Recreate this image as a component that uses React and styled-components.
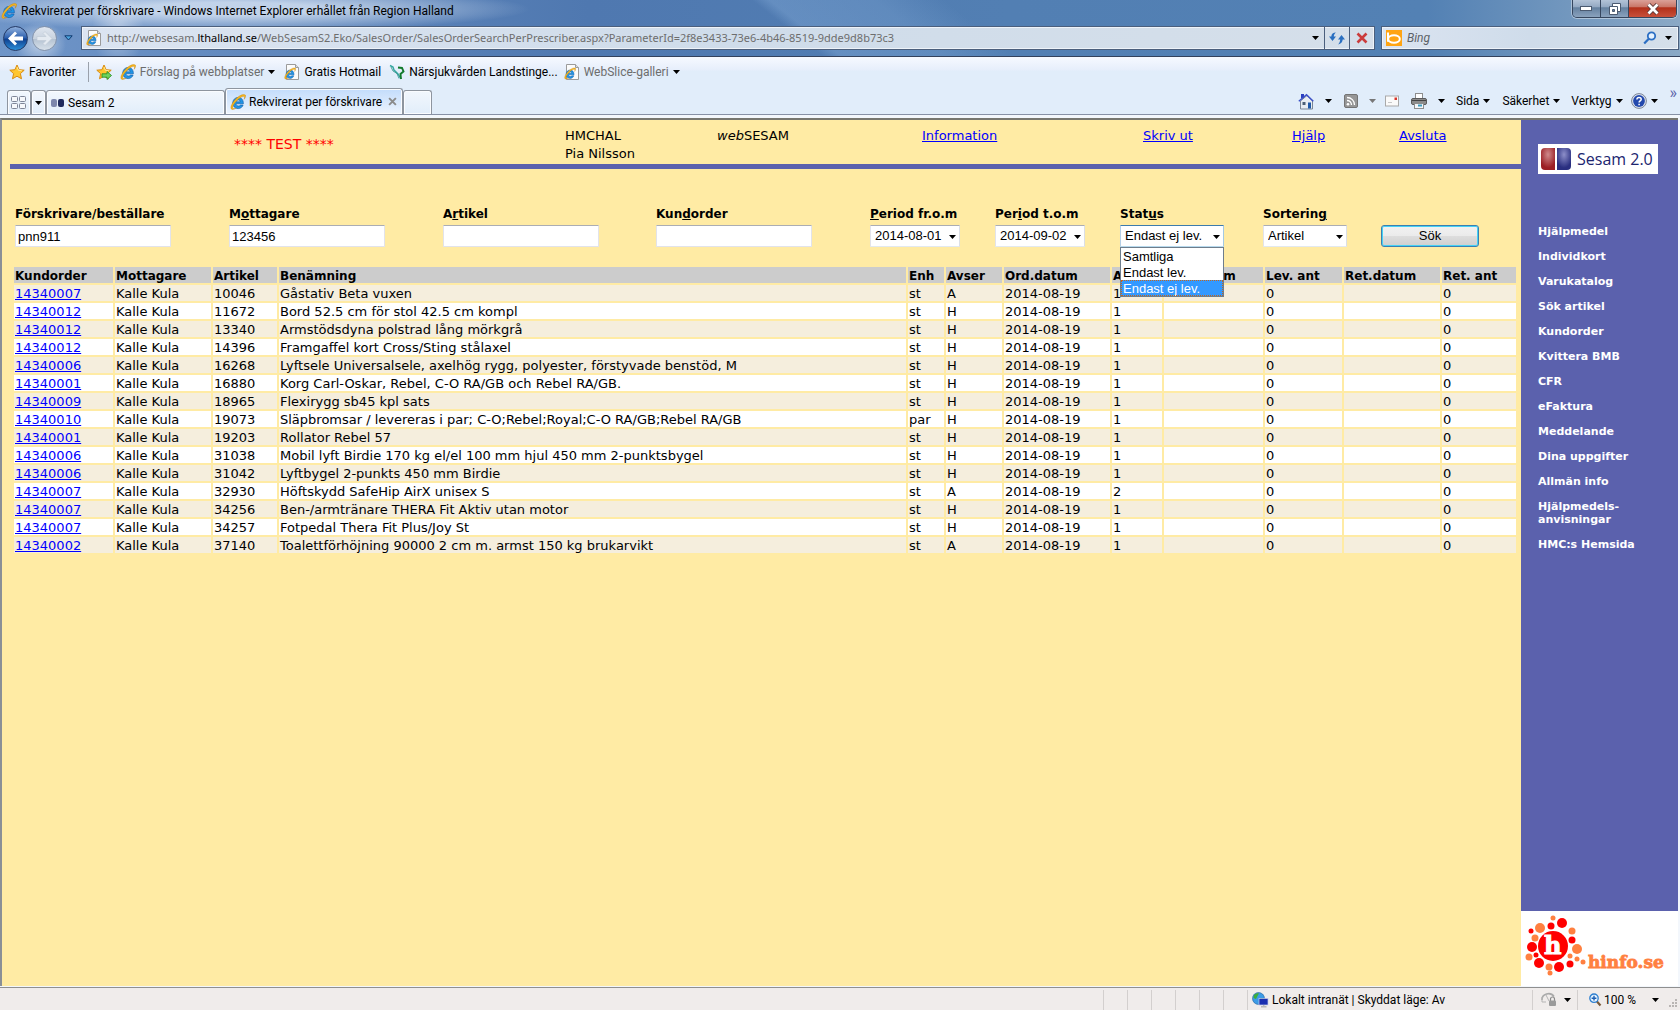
import React from 'react';
import styled, { createGlobalStyle, css } from 'styled-components';

const ui = 'Roboto, "Noto Sans", sans-serif';
const verdana = '"DejaVu Sans", sans-serif';
const arial = '"Liberation Sans", sans-serif';

const GlobalStyle = createGlobalStyle`
  *, *::before, *::after { box-sizing: border-box; }
  html, body { margin: 0; padding: 0; }
  button, input, select { margin: 0; padding: 0; border: 0; font: inherit; color: inherit; }
  button { background: none; }
  ul { margin: 0; padding: 0; list-style: none; }
  svg { flex: none; }
`;

/* ---------- browser window ---------- */

const Window = styled.div`
  display: flex;
  flex-direction: column;
  min-height: 100vh;
  background: #f3f7fc;
  color: #000;
  font: 12px/16px ${ui};
`;

const Glass = styled.header`
  display: flex;
  flex-direction: column;
  height: 57px;
  border-bottom: 1px solid #33415c;
  background:
    radial-gradient(ellipse 26px 22px at 40px 44px, rgba(255,255,255,0.55), transparent),
    radial-gradient(ellipse 26px 40px at 118px 30px, rgba(255,255,255,0.4), transparent),
    radial-gradient(ellipse 300px 22px at 230px 9px, rgba(225,235,248,0.75) 30%, transparent),
    linear-gradient(38deg, transparent 47%, rgba(130,170,215,0.4) 48%, rgba(130,170,215,0.3) 54%, transparent 58%),
    linear-gradient(90deg, #6f95c8 0, #4f78b0 35%, #527fb3 60%, #5381b4 85%, #8ba9c6 100%);
`;

const TitleRow = styled.div`
  display: flex;
  justify-content: space-between;
  height: 26px;
  padding: 0 3px 0 1px;
`;

const Title = styled.div`
  display: flex;
  align-items: center;
  gap: 4px;
  height: 22px;
  white-space: nowrap;
`;

const Caption = styled.div`
  display: flex;
  height: 18px;
  border: 1px solid #36465e;
  border-top: 0;
  border-radius: 0 0 5px 5px;
  overflow: hidden;
  box-shadow: 0 0 0 1px rgba(255, 255, 255, 0.4);
`;

const CaptionButton = styled.button`
  display: grid;
  place-items: center;
  width: ${p => (p.$close ? 47 : 28)}px;
  border-right: ${p => (p.$close ? 0 : '1px solid #36465e')};
  background: ${p => (p.$close
    ? 'linear-gradient(#dba198, #c97566 42%, #b2301a 45%, #c8503a)'
    : 'linear-gradient(#b3c3d7, #93a8c2 42%, #64809f 45%, #8aa2bd)')};
`;

const AddressRow = styled.div`
  display: flex;
  align-items: center;
  gap: 6px;
  height: 24px;
  padding: 0 1px 0 3px;
`;

const NavButtons = styled.div`
  display: flex;
  align-items: center;
  gap: 4px;
  width: 72px;
  height: 24px;
`;

const Orb = styled.button`
  display: grid;
  place-items: center;
  width: 25px;
  height: 25px;
  border-radius: 50%;
  border: 1px solid ${p => (p.$on ? '#243a66' : '#8393ab')};
  background: ${p => (p.$on
    ? 'linear-gradient(#8fb0dd, #2c5fae 48%, #0f3f8f 52%, #2d8fd8)'
    : 'linear-gradient(#dfe6f0, #c9d3df 50%, #b4c2d2 52%, #d8e1ea)')};
`;

const GlassBox = styled.div`
  display: flex;
  align-items: center;
  height: 24px;
  border: 1px solid #4b5f7d;
  box-shadow: inset 0 0 0 1px #eef3f9;
  background: linear-gradient(90deg, #dbe4f1, #cfdcea 50%, #d5dfea);
  color: #6d6d6d;
`;

const AddressBox = styled(GlassBox)`
  flex: 1;
  padding-left: 4px;
`;

const SearchBox = styled(GlassBox)`
  width: 298px;
  padding: 0 4px;
  gap: 5px;
`;

const Url = styled.div`
  flex: 1;
  padding-left: 5px;
  font: 11px/16px "Noto Sans", sans-serif;
  white-space: nowrap;
  b { font-weight: 400; color: #000; }
`;

const BoxButton = styled.button`
  display: grid;
  place-items: center;
  width: ${p => p.$w || 25}px;
  height: 22px;
  border-left: ${p => (p.$line ? '1px solid #4b5f7d' : 0)};
`;

const SearchInput = styled.input`
  flex: 1;
  min-width: 0;
  background: none;
  font-style: italic;
  &::placeholder { color: #5c6166; opacity: 1; }
`;

const Bars = styled.div`
  height: 58px;
  border-bottom: 1px solid #8791a5;
  background: linear-gradient(#f6f9ff 0, #e6eefb 13px, #e1edfa 14px);
`;

const FavRow = styled.div`
  display: flex;
  align-items: center;
  height: 30px;
  padding-left: 9px;
`;

const FavButton = styled.button`
  display: flex;
  align-items: center;
  gap: 4px;
  margin-right: ${p => p.$after}px;
  color: ${p => (p.$muted ? '#6d6d6d' : '#000')};
  white-space: nowrap;
`;

const Divider = styled.span`
  width: 1px;
  height: 20px;
  margin-right: 7px;
  background: #9aa1ab;
`;

const TabRow = styled.div`
  display: flex;
  align-items: flex-end;
  height: 27px;
  padding: 0 3px 0 7px;
`;

const Tab = styled.div`
  display: flex;
  align-items: center;
  width: ${p => p.$w}px;
  height: ${p => (p.$active ? 26 : 24)}px;
  padding: 0 ${p => p.$pad || 4}px;
  gap: 3px;
  border: 1px solid #8e959f;
  border-bottom: 0;
  border-radius: 3px 3px 0 0;
  background: ${p => (p.$active ? 'linear-gradient(#c3dcfb, #ecf4fe)' : 'linear-gradient(#f2f7fd, #e1edfa)')};
  box-shadow: inset 0 0 0 1px #fafcff;
  white-space: nowrap;
`;

const TabClose = styled.button`
  display: grid;
  place-items: center;
  margin-left: auto;
  width: 12px;
  height: 12px;
`;

const CommandBar = styled.div`
  display: flex;
  align-items: center;
  margin-left: auto;
  height: 26px;
`;

const Command = styled.button`
  display: flex;
  align-items: center;
  gap: ${p => (p.$wide ? 11 : 4)}px;
  margin-right: ${p => p.$after}px;
`;

const Chevrons = styled.button`
  align-self: flex-start;
  height: 10px;
  color: #5a62a8;
  font-size: 16px;
  line-height: 6px;
`;

/* ---------- page ---------- */

const Page = styled.div`
  flex: 1;
  display: flex;
  margin: 3px 2px 1px 0;
  border-top: 2px solid #77776f;
  border-left: 2px solid #8a8f96;
  background: #ffeba4;
  font: 13px/16px ${verdana};
`;

const Main = styled.main`
  flex: 1;
  min-width: 0;
`;

const PageLink = styled.a`
  color: #0000ff;
  text-decoration: underline;
`;

const Banner = styled.div`
  display: grid;
  grid-template-columns: 331fr 152fr 205fr 221fr 149fr 107fr 122fr;
  height: 49px;
  margin-left: 8px;
  padding: 7px 0 0 224px;
  border-bottom: 5px solid #5b61ad;
  line-height: 18px;
`;

const TestNote = styled.div`
  padding-top: 8px;
  color: #ff0000;
  font-size: 14px;
`;

const Filters = styled.form`
  display: grid;
  grid-template-columns: 214fr 214fr 213fr 214fr 125fr 125fr 143fr 118fr 140fr;
  align-items: end;
  padding: 37px 0 0 13px;
`;

const Field = styled.div`
  label {
    display: block;
    margin-bottom: 3px;
    font-size: 12px;
    font-weight: 700;
    line-height: 16px;
    white-space: nowrap;
  }
`;

const control = css`
  display: block;
  height: 22px;
  border: 1px solid #e2e3ea;
  border-top-color: #abadb3;
  border-radius: 1px;
  background: #fff;
  font: 13px/16px ${arial};
`;

const TextBox = styled.input`
  ${control}
  width: 156px;
  padding: 0 2px;
`;

const SelectWrap = styled.div`
  position: relative;
  width: ${p => p.$w}px;
`;

const Select = styled.select`
  ${control}
  width: 100%;
  padding: 0 0 0 4px;
  appearance: none;
  border-color: ${p => (p.$open ? '#3d7bad #a4c9e3 #b7d9ed #b5cfe7' : '#abadb3 #dbdfe6 #e3e9ef #e2e3ea')};
`;

const SelectArrow = styled.span`
  position: absolute;
  top: 10px;
  right: 4px;
  display: flex;
  pointer-events: none;
`;

const Options = styled.ul`
  position: absolute;
  top: 22px;
  left: 0;
  width: 100%;
  border: 1px solid #6e7d8c;
  background: #fff;
  font: 13px/15px ${arial};
`;

const Option = styled.li`
  height: 16px;
  padding: 1px 0 0 2px;
  ${p => p.$on && css`
    background: #3399ff;
    color: #fff;
    outline: 1px dotted #c5661a;
    outline-offset: -1px;
  `}
`;

const SearchButton = styled.button`
  width: 98px;
  height: 22px;
  border: 1px solid #3c7fb1;
  border-radius: 3px;
  box-shadow: inset 0 0 0 1px #45d2f5;
  background: linear-gradient(#f2f2f2, #ebebeb 48%, #dddddd 52%, #cfcfcf);
  font: 13px/16px ${arial};
`;

const Orders = styled.table`
  width: calc(100% - 13px);
  margin: 18px 0 0 10px;
  border-collapse: separate;
  border-spacing: 2px;
  table-layout: fixed;
  line-height: 15px;
  th, td {
    height: 16px;
    padding: 1px 1px 0;
    text-align: left;
    white-space: nowrap;
    overflow: hidden;
  }
  th { padding-top: 2px; background: #cccccc; font-size: 12px; line-height: 14px; }
  tbody tr:nth-child(odd) td { background: #f5eedd; }
  tbody tr:nth-child(even) td { background: #fff; }
`;

const Col = styled.col`
  width: ${p => (p.$w ? `${p.$w}px` : 'auto')};
`;

const Sidebar = styled.aside`
  display: flex;
  flex-direction: column;
  width: 157px;
  background: #5b61ad;
`;

const SesamLogo = styled.div`
  display: flex;
  align-items: center;
  gap: 6px;
  width: 120px;
  height: 30px;
  margin: 24px 0 51px 17px;
  padding-left: 3px;
  background: #fff;
  color: #20256f;
  font: 16px/30px "Open Sans", sans-serif;
  white-space: nowrap;
`;

const Menu = styled.nav`
  display: flex;
  flex-direction: column;
  gap: 12px;
  padding-left: 17px;
  a {
    color: #fff;
    font: 700 11px/13px ${verdana};
    text-decoration: none;
  }
`;

const HinfoLogo = styled.div`
  height: 75px;
  margin-top: auto;
  background: #fff;
`;

const StatusBar = styled.footer`
  display: flex;
  align-items: stretch;
  height: 23px;
  border-top: 1px solid #8f8f8f;
  background: #f0eceb;
`;

const Slot = styled.div`
  width: 24px;
  margin-top: 2px;
  border-left: 1px solid #d3cfce;
`;

const Zone = styled.div`
  display: flex;
  align-items: center;
  gap: 3px;
  width: 285px;
  margin-top: 2px;
  padding-left: 4px;
  border-left: 1px solid #d3cfce;
`;

const StatusButton = styled.button`
  display: flex;
  align-items: center;
  justify-content: space-between;
  width: ${p => p.$w}px;
  margin-top: 2px;
  padding: 0 6px 0 8px;
  border-left: 1px solid #d3cfce;
`;

const ZoomLabel = styled.span`
  display: flex;
  align-items: center;
  gap: 2px;
  padding-left: 3px;
`;

const GripCell = styled.div`
  display: flex;
  align-items: flex-end;
  justify-content: flex-end;
  width: 15px;
  padding: 0 2px 2px 0;
`;

const Spacer = styled.div`
  flex: 1;
`;

/* ---------- drawings ---------- */

const Arrow = ({ color = '#000' }) => (
  <svg width="7" height="4" viewBox="0 0 7 4" aria-hidden="true"><path d="M0 0h7L3.500 4z" fill={color} /></svg>
);

const IeMark = () => (
  <>
    <path d="M13.400 9.800H6c.1 1.400 1.100 2.200 2.400 2.200 1 0 1.600-.3 2-.9h2.700c-.8 2.200-2.600 3.500-4.900 3.500-3.300 0-5.500-2.300-5.500-5.500s2.300-5.700 5.500-5.700c3.300 0 5.300 2.500 5.200 6.400zM6 7.800h4.300c-.1-1.200-.9-1.900-2.100-1.900S6.200 6.600 6 7.800z" fill="#1f94e6" stroke="#0b57a4" strokeWidth=".6" />
    <path d="M15.400 1.100c-1.900-1.500-6.300.4-9.800 4.100C2.100 8.900 0 13.200 1.300 14.900c.8 1 2.700.6 4.800-.8-1.700.7-2.800.7-3.200.1-.9-1.300 1-4.500 4-7.600s6.100-4.900 7.300-4c.5.400.5 1.400 0 2.700 1.100-1.600 1.800-3.600 1.200-4.200z" fill="#f7b61c" stroke="#c17d0a" strokeWidth=".4" />
  </>
);

const Ie = () => (
  <svg width="16" height="16" viewBox="0 0 16 16" aria-hidden="true"><IeMark /></svg>
);

const PageIe = () => (
  <svg width="16" height="16" viewBox="0 0 16 16" aria-hidden="true">
    <path d="M2.500.5h9l3 3v12h-12z" fill="#fbfbfb" stroke="#9b9b9b" />
    <path d="M11.500.5v3h3" fill="#ddd" stroke="#9b9b9b" />
    <g transform="translate(0 3.500) scale(.75)"><IeMark /></g>
  </svg>
);

const Star = ({ add }) => (
  <svg width="16" height="16" viewBox="0 0 16 16" aria-hidden="true">
    <path d="M8 1l2.100 4.700 5.100.5-3.800 3.400 1.100 5.200L8 12.200l-4.500 2.600 1.100-5.200L.8 6.200l5.100-.5z" fill="#ffc62e" stroke="#d98c12" strokeLinejoin="round" />
    <path d="M8 3l1.400 3.300 3.400.4" fill="none" stroke="#ffe79a" />
    {add && <path d="M6 9.800h5V7.500l4.500 4-4.500 4v-2.300H6z" fill="#6fd35b" stroke="#1f8a22" strokeWidth=".8" />}
  </svg>
);

const Branch = () => (
  <svg width="16" height="16" viewBox="0 0 16 16" aria-hidden="true" fill="none">
    <path d="M1 1.500l3 1.500 1 3 4 4 3 5" stroke="#35a7a0" strokeWidth="1.400" />
    <path d="M2 3l2 4 4 2.500 2 5" stroke="#2f8f8a" strokeWidth=".8" />
    <path d="M9 3.500l4 .5 1.500 3.500-3 2.500.5 5" stroke="#127a2c" strokeWidth="1.900" />
  </svg>
);

const BackArrow = ({ color }) => (
  <svg width="19" height="17" viewBox="0 0 19 17" aria-hidden="true">
    <path d="M9 1.500L2 8.500l7 7 2-2-3-3h9v-4H8l3-3z" fill={color} />
  </svg>
);

const ForwardArrow = () => (
  <svg width="19" height="17" viewBox="0 0 19 17" aria-hidden="true">
    <path d="M10 1.500l7 7-7 7-2-2 3-3H2v-4h9l-3-3z" fill="#e4eaf1" stroke="#c0cad5" strokeWidth=".7" />
  </svg>
);

const Refresh = () => (
  <svg width="16" height="16" viewBox="0 0 16 16" aria-hidden="true" fill="#2a6fc0">
    <path d="M0 6.500L3.500 11 7 6.500H4.800C4.900 4.800 5.600 3.500 7 2.500 4 2.500 2.500 4 2.300 6.500z" />
    <path d="M9 9.500L12.500 5 16 9.500h-2.300c-.2 2.500-1.700 4.500-4.700 5 1.400-1.200 2.100-3 2.200-5z" />
  </svg>
);

const Cross = ({ size = 12, color = '#cb3c3c', width = 2.600 }) => (
  <svg width={size} height={size} viewBox="0 0 12 12" aria-hidden="true">
    <path d="M1.500 1.500l9 9m0-9l-9 9" stroke={color} strokeWidth={width} />
  </svg>
);

const Bing = () => (
  <svg width="16" height="16" viewBox="0 0 16 16" aria-hidden="true">
    <rect width="16" height="16" fill="#ffa413" />
    <path d="M2 2.500v9.300" stroke="#fff" strokeWidth="2" />
    <ellipse cx="8" cy="9" rx="5.800" ry="3.700" fill="none" stroke="#fff" strokeWidth="2" />
  </svg>
);

const Magnifier = () => (
  <svg width="14" height="14" viewBox="0 0 14 14" aria-hidden="true">
    <circle cx="8.500" cy="5" r="3.700" fill="#e6f2ff" stroke="#2c6fc4" strokeWidth="1.800" />
    <path d="M5.800 7.800L1.200 12.600" stroke="#2c6fc4" strokeWidth="2.200" />
  </svg>
);

const Grid4 = () => (
  <svg width="16" height="14" viewBox="0 0 16 14" aria-hidden="true" fill="#f6f8fb" stroke="#7f8698">
    <rect x=".5" y=".5" width="6" height="5" rx="1" /><rect x="8.500" y=".5" width="6" height="5" rx="1" />
    <rect x=".5" y="7.500" width="6" height="5" rx="1" /><rect x="8.500" y="7.500" width="6" height="5" rx="1" />
  </svg>
);

const SesamSmall = () => (
  <svg width="14" height="10" viewBox="0 0 14 10" aria-hidden="true">
    <rect x="0" y="1" width="6" height="8" rx="2" fill="#7c86ac" /><rect x="7" y="1" width="6" height="8" rx="2" fill="#1f2a5c" />
  </svg>
);

const Home = () => (
  <svg width="16" height="17" viewBox="0 0 16 17" aria-hidden="true">
    <path d="M3 1h3v4H3z" fill="#2b3fc0" />
    <path d="M2.500 8L9 2.500 14.500 8v8h-12z" fill="#e8edf2" stroke="#7b8796" />
    <path d="M.8 8.300L8.500 1.700l6.800 6.600" fill="none" stroke="#3a4fc8" strokeWidth="1.400" />
    <rect x="4.500" y="9" width="3" height="3" fill="#4c6076" /><rect x="10" y="9.500" width="3" height="6" fill="#1e58a8" />
  </svg>
);

const Feed = () => (
  <svg width="14" height="14" viewBox="0 0 14 14" aria-hidden="true">
    <rect x=".5" y=".5" width="13" height="13" rx="1.500" fill="#969696" stroke="#747474" />
    <circle cx="4" cy="10.300" r="1.300" fill="#fff" />
    <path d="M3 6.500c2.600 0 4.500 1.900 4.500 4.500M3 3.500c4.300 0 7.500 3.200 7.500 7.500" fill="none" stroke="#fff" strokeWidth="1.300" />
  </svg>
);

const Mail = () => (
  <svg width="14" height="12" viewBox="0 0 14 12" aria-hidden="true">
    <rect x=".5" y="1" width="13" height="10" fill="#fafafa" stroke="#a9a9a9" />
    <rect x="9.500" y="2.500" width="2.500" height="2.500" fill="#d9342b" /><path d="M3 7.500h4" stroke="#c8c8c8" />
  </svg>
);

const Printer = () => (
  <svg width="16" height="16" viewBox="0 0 16 16" aria-hidden="true">
    <rect x="4.500" y=".5" width="7" height="5" fill="#fff" stroke="#8d8d8d" />
    <rect x=".5" y="5.500" width="15" height="6" rx="1.500" fill="#8c8c8c" stroke="#5c5c5c" />
    <path d="M1 7.500h14" stroke="#444" />
    <rect x="3.500" y="10.500" width="9" height="5" fill="#f4f6f8" stroke="#8d8d8d" />
    <rect x="7" y="11.500" width="4" height="2" fill="#3d9bbf" />
  </svg>
);

const HelpIcon = () => (
  <svg width="16" height="16" viewBox="0 0 16 16" aria-hidden="true">
    <circle cx="8" cy="8" r="7.400" fill="#dfe5ee" stroke="#7a8496" />
    <circle cx="8" cy="8" r="5.900" fill="#2349ad" />
    <path d="M5.900 6.500c0-2.800 4.300-2.700 4.300-.3 0 1.600-2.100 1.600-2.100 3.200M8.100 10.800v1.400" fill="none" stroke="#fff" strokeWidth="1.500" />
  </svg>
);

const Globe = () => (
  <svg width="17" height="16" viewBox="0 0 17 16" aria-hidden="true">
    <circle cx="6.500" cy="6.500" r="6" fill="#3d9be6" stroke="#1f5f9e" strokeWidth=".6" />
    <path d="M2 3c2-2 4-2 5-1.500L5.500 4 4 7 1.500 6zM7 7l4-1 1 2-3 3.500-2-1z" fill="#3fae3a" />
    <rect x="7" y="6.500" width="9" height="6.500" fill="#1a2fb0" stroke="#c5cbe8" strokeWidth=".7" />
    <path d="M9 14.800h5.500M11.700 13v1.500" stroke="#b8b8b8" strokeWidth="1.500" />
  </svg>
);

const Blocked = () => (
  <svg width="17" height="16" viewBox="0 0 17 16" aria-hidden="true">
    <path d="M1 8a6.500 6 0 0 1 12-3.500" fill="none" stroke="#a9a9a9" strokeWidth="1.600" />
    <path d="M1 5v5h4M5 3l3 6" fill="none" stroke="#b5b5b5" />
    <path d="M9.500 9V7a2 2 0 0 1 4 0v2" fill="none" stroke="#8a8a8a" strokeWidth="1.200" />
    <rect x="8" y="8.500" width="7" height="5.500" rx="1" fill="#9a9a9a" />
  </svg>
);

const ZoomIcon = () => (
  <svg width="13" height="14" viewBox="0 0 13 14" aria-hidden="true">
    <path d="M7.500 8l4 4.500" stroke="#7a5a3a" strokeWidth="2.200" />
    <circle cx="5" cy="5.200" r="4.200" fill="#e9f5ff" stroke="#2d7fd0" strokeWidth="1.300" />
    <path d="M5 2.800v4.800M2.600 5.200h4.800" stroke="#1c5fb4" strokeWidth="1.400" />
  </svg>
);

const Grip = () => (
  <svg width="9" height="9" viewBox="0 0 9 9" aria-hidden="true" fill="#b9b5b3">
    <path d="M6 0h2v2H6zM3 3h2v2H3zM6 3h2v2H6zM0 6h2v2H0zM3 6h2v2H3zM6 6h2v2H6z" />
  </svg>
);

const SesamMark = () => (
  <svg width="30" height="22" viewBox="0 0 30 22" aria-hidden="true">
    <defs>
      <radialGradient id="sesamRed" cx=".5" cy=".3" r=".6"><stop offset="0" stopColor="#cf8a8c" /><stop offset="1" stopColor="#9c1f24" /></radialGradient>
      <radialGradient id="sesamBlue" cx=".5" cy=".3" r=".6"><stop offset="0" stopColor="#8d8fc9" /><stop offset="1" stopColor="#2a2f80" /></radialGradient>
    </defs>
    <path d="M4 0h10v22H4a4 4 0 0 1-4-4V4a4 4 0 0 1 4-4z" fill="url(#sesamRed)" />
    <path d="M16 0h10a4 4 0 0 1 4 4v14a4 4 0 0 1-4 4H16z" fill="url(#sesamBlue)" />
  </svg>
);

const R = '#ff0000';
const O = '#ff8040';
const DOTS = [
  [32, 7, 2.500, O], [30, 15, 3.500, R], [41, 12, 5, R], [19, 17, 5, O], [10, 20, 2.500, R], [14, 27, 3.500, O],
  [51, 20, 3.500, O], [51, 29, 3.500, R], [56, 38, 5, O], [11, 36, 5, R], [15, 44, 2.500, R], [8, 46, 3.500, O],
  [18, 52, 5, R], [28, 56, 3.500, O], [29, 62, 2.500, O], [38, 56, 5, R], [49, 53, 3.500, R], [49, 45, 2.500, O],
  [56, 48, 2.500, O], [62, 51, 2.500, O],
];

const Hinfo = () => (
  <svg width="157" height="74" viewBox="0 0 157 74" role="img" aria-label="hinfo.se">
    <circle cx="32" cy="35" r="15" fill={R} />
    {DOTS.map(([x, y, r, c]) => <circle key={`${x}-${y}`} cx={x} cy={y} r={r} fill={c} />)}
    <text x="23" y="43" fill="#fff" stroke="#fff" strokeWidth="1" fontFamily="DejaVu Serif, serif" fontWeight="700" fontSize="24">h</text>
    <text x="67" y="57" fill={O} stroke={O} strokeWidth=".8" fontFamily="DejaVu Serif, serif" fontWeight="700" fontSize="17">hinfo.se</text>
  </svg>
);

/* ---------- data ---------- */

const COLUMNS = [
  ['Kundorder', 99], ['Mottagare', 96], ['Artikel', 64], ['Benämning'], ['Enh', 36], ['Avser', 56],
  ['Ord.datum', 106], ['Antal', 50], ['Lev.datum', 99], ['Lev. ant', 77], ['Ret.datum', 96], ['Ret. ant', 74],
];

const ROWS = [
  ['14340007', '10046', 'Gåstativ Beta vuxen', 'st', 'A', '1'],
  ['14340012', '11672', 'Bord 52.5 cm för stol 42.5 cm kompl', 'st', 'H', '1'],
  ['14340012', '13340', 'Armstödsdyna polstrad lång mörkgrå', 'st', 'H', '1'],
  ['14340012', '14396', 'Framgaffel kort Cross/Sting stålaxel', 'st', 'H', '1'],
  ['14340006', '16268', 'Lyftsele Universalsele, axelhög rygg, polyester, förstyvade benstöd, M', 'st', 'H', '1'],
  ['14340001', '16880', 'Korg Carl-Oskar, Rebel, C-O RA/GB och Rebel RA/GB.', 'st', 'H', '1'],
  ['14340009', '18965', 'Flexirygg sb45 kpl sats', 'st', 'H', '1'],
  ['14340010', '19073', 'Släpbromsar / levereras i par; C-O;Rebel;Royal;C-O RA/GB;Rebel RA/GB', 'par', 'H', '1'],
  ['14340001', '19203', 'Rollator Rebel 57', 'st', 'H', '1'],
  ['14340006', '31038', 'Mobil lyft Birdie 170 kg el/el 100 mm hjul 450 mm 2-punktsbygel', 'st', 'H', '1'],
  ['14340006', '31042', 'Lyftbygel 2-punkts 450 mm Birdie', 'st', 'H', '1'],
  ['14340007', '32930', 'Höftskydd SafeHip AirX unisex S', 'st', 'A', '2'],
  ['14340007', '34256', 'Ben-/armtränare THERA Fit Aktiv utan motor', 'st', 'H', '1'],
  ['14340007', '34257', 'Fotpedal Thera Fit Plus/Joy St', 'st', 'H', '1'],
  ['14340002', '37140', 'Toalettförhöjning 90000 2 cm m. armst 150 kg brukarvikt', 'st', 'A', '1'],
];

const MENU = [
  'Hjälpmedel', 'Individkort', 'Varukatalog', 'Sök artikel', 'Kundorder', 'Kvittera BMB', 'CFR', 'eFaktura',
  'Meddelande', 'Dina uppgifter', 'Allmän info', 'Hjälpmedels-\nanvisningar', 'HMC:s Hemsida',
];

const SLOTS = [1, 2, 3, 4, 5, 6];

/* ---------- composed parts ---------- */

function TextField({ id, label, value = '' }) {
  return (
    <Field>
      <label htmlFor={id}>{label}</label>
      <TextBox id={id} type="text" defaultValue={value} />
    </Field>
  );
}

function SelectField({ id, label, width, value, options = [value], open }) {
  return (
    <Field>
      <label htmlFor={id}>{label}</label>
      <SelectWrap $w={width}>
        <Select id={id} defaultValue={value} $open={open}>
          {options.map(o => <option key={o}>{o}</option>)}
        </Select>
        <SelectArrow><Arrow /></SelectArrow>
        {open && (
          <Options role="listbox" aria-label="Status">
            {options.map(o => <Option key={o} role="option" aria-selected={o === value} $on={o === value}>{o}</Option>)}
          </Options>
        )}
      </SelectWrap>
    </Field>
  );
}

function BrowserChrome() {
  return (
    <>
      <Glass>
        <TitleRow>
          <Title><Ie />Rekvirerat per förskrivare - Windows Internet Explorer erhållet från Region Halland</Title>
          <Caption>
            <CaptionButton aria-label="Minimera">
              <svg width="13" height="6" viewBox="0 0 13 6"><rect x=".5" y=".5" width="11" height="4" fill="#fff" stroke="#4b5a70" /></svg>
            </CaptionButton>
            <CaptionButton aria-label="Återställ">
              <svg width="12" height="12" viewBox="0 0 12 12"><path d="M3.500 .5h8v8h-8z" fill="#fff" stroke="#4b5a70" /><path d="M.5 3.500h8v8h-8z" fill="#fff" stroke="#4b5a70" /><path d="M3.500 6.500h2v2h-2z" fill="#64809f" stroke="#4b5a70" /></svg>
            </CaptionButton>
            <CaptionButton $close aria-label="Stäng">
              <svg width="14" height="12" viewBox="0 0 14 12"><path d="M2.500 1.500l9 9m0-9l-9 9" stroke="#5b3a3a" strokeWidth="4.500" /><path d="M2.500 1.500l9 9m0-9l-9 9" stroke="#fff" strokeWidth="2.800" /></svg>
            </CaptionButton>
          </Caption>
        </TitleRow>
        <AddressRow>
          <NavButtons>
            <Orb $on aria-label="Bakåt"><BackArrow color="#fff" /></Orb>
            <Orb aria-label="Framåt"><ForwardArrow /></Orb>
            <BoxButton $w={14} aria-label="Senaste sidor"><svg width="9" height="6" viewBox="0 0 9 6"><path d="M.8.800h7.400L4.500 5z" fill="#4aa3dd" stroke="#123a6e" /></svg></BoxButton>
          </NavButtons>
          <AddressBox>
            <PageIe />
            <Url>http://websesam.<b>lthalland.se</b>/WebSesamS2.Eko/SalesOrder/SalesOrderSearchPerPrescriber.aspx?ParameterId=2f8e3433-73e6-4b46-8519-9dde9d8b73c3</Url>
            <BoxButton $w={18} aria-label="Visa adresser"><Arrow /></BoxButton>
            <BoxButton $line aria-label="Uppdatera"><Refresh /></BoxButton>
            <BoxButton $line aria-label="Stoppa"><Cross /></BoxButton>
          </AddressBox>
          <SearchBox>
            <Bing />
            <SearchInput aria-label="Sök med Bing" placeholder="Bing" />
            <BoxButton $w={14} aria-label="Sök på webben"><Magnifier /></BoxButton>
            <BoxButton $w={12} aria-label="Sökalternativ"><Arrow /></BoxButton>
          </SearchBox>
        </AddressRow>
      </Glass>
      <Bars>
        <FavRow>
          <FavButton $after={12}><Star />Favoriter</FavButton>
          <Divider />
          <FavButton $after={8} aria-label="Lägg till i Favoriter"><Star add /></FavButton>
          <FavButton $after={9} $muted><Ie />Förslag på webbplatser<Arrow /></FavButton>
          <FavButton $after={8}><PageIe />Gratis Hotmail</FavButton>
          <FavButton $after={6}><Branch />Närsjukvården Landstinge...</FavButton>
          <FavButton $after={0} $muted><PageIe />WebSlice-galleri<Arrow /></FavButton>
        </FavRow>
        <TabRow>
          <Tab as="button" $w={24} $pad={3} aria-label="Snabbflikar"><Grid4 /></Tab>
          <Tab as="button" $w={15} $pad={3} aria-label="Fliklista"><Arrow /></Tab>
          <Tab $w={179}><SesamSmall />Sesam 2</Tab>
          <Tab $w={178} $active><Ie />Rekvirerat per förskrivare<TabClose aria-label="Stäng fliken"><Cross size={9} color="#8b8b8b" /></TabClose></Tab>
          <Tab as="button" $w={29} aria-label="Ny flik" />
          <CommandBar>
            <Command $wide $after={12} aria-label="Startsida"><Home /><Arrow /></Command>
            <Command $wide $after={9} aria-label="Feeds"><Feed /><Arrow color="#777" /></Command>
            <Command $after={12} aria-label="Läs e-post"><Mail /></Command>
            <Command $wide $after={11} aria-label="Skriv ut"><Printer /><Arrow /></Command>
            <Command $after={12}>Sida<Arrow /></Command>
            <Command $after={11}>Säkerhet<Arrow /></Command>
            <Command $after={8}>Verktyg<Arrow /></Command>
            <Command $after={12} aria-label="Hjälp"><HelpIcon /><Arrow /></Command>
            <Chevrons>»</Chevrons>
          </CommandBar>
        </TabRow>
      </Bars>
    </>
  );
}

export default function App() {
  return (
    <Window>
      <GlobalStyle />
      <BrowserChrome />
      <Page>
        <Main>
          <Banner>
            <TestNote>**** TEST ****</TestNote>
            <div>HMCHAL<br />Pia Nilsson</div>
            <div><i>web</i>SESAM</div>
            <div><PageLink href="#information">Information</PageLink></div>
            <div><PageLink href="#skriv-ut">Skriv ut</PageLink></div>
            <div><PageLink href="#hjalp">Hjälp</PageLink></div>
            <div><PageLink href="#avsluta">Avsluta</PageLink></div>
          </Banner>
          <Filters onSubmit={e => e.preventDefault()}>
            <TextField id="forskrivare" label="Förskrivare/beställare" value="pnn911" />
            <TextField id="mottagare" label={<>M<u>o</u>ttagare</>} value="123456" />
            <TextField id="artikel" label={<>A<u>r</u>tikel</>} />
            <TextField id="kundorder" label={<>Kun<u>d</u>order</>} />
            <SelectField id="from" label={<><u>P</u>eriod fr.o.m</>} width={90} value="2014-08-01" />
            <SelectField id="tom" label={<>Per<u>i</u>od t.o.m</>} width={90} value="2014-09-02" />
            <SelectField id="status" label={<>Stat<u>u</u>s</>} width={104} value="Endast ej lev." options={['Samtliga', 'Endast lev.', 'Endast ej lev.']} open />
            <SelectField id="sortering" label={<>Sorterin<u>g</u></>} width={84} value="Artikel" />
            <SearchButton type="submit">Sök</SearchButton>
          </Filters>
          <Orders>
            <colgroup>{COLUMNS.map(([name, w]) => <Col key={name} $w={w} />)}</colgroup>
            <thead>
              <tr>{COLUMNS.map(([name]) => <th key={name} scope="col">{name}</th>)}</tr>
            </thead>
            <tbody>
              {ROWS.map(([order, item, name, unit, refers, qty]) => (
                <tr key={item}>
                  <td><PageLink href={`#${order}`}>{order}</PageLink></td>
                  <td>Kalle Kula</td>
                  <td>{item}</td>
                  <td>{name}</td>
                  <td>{unit}</td>
                  <td>{refers}</td>
                  <td>2014-08-19</td>
                  <td>{qty}</td>
                  <td />
                  <td>0</td>
                  <td />
                  <td>0</td>
                </tr>
              ))}
            </tbody>
          </Orders>
        </Main>
        <Sidebar>
          <SesamLogo><SesamMark />Sesam 2.0</SesamLogo>
          <Menu>
            {MENU.map(item => (
              <a key={item} href="#meny">{item.split('\n').map((line, i) => <React.Fragment key={line}>{i > 0 && <br />}{line}</React.Fragment>)}</a>
            ))}
          </Menu>
          <HinfoLogo><Hinfo /></HinfoLogo>
        </Sidebar>
      </Page>
      <StatusBar>
        <Spacer />
        {SLOTS.map(n => <Slot key={n} />)}
        <Zone><Globe />Lokalt intranät | Skyddat läge: Av</Zone>
        <StatusButton $w={45} aria-label="Skyddat läge"><Blocked /><Arrow /></StatusButton>
        <StatusButton $w={88}><ZoomLabel><ZoomIcon />100 %</ZoomLabel><Arrow /></StatusButton>
        <GripCell><Grip /></GripCell>
      </StatusBar>
    </Window>
  );
}
